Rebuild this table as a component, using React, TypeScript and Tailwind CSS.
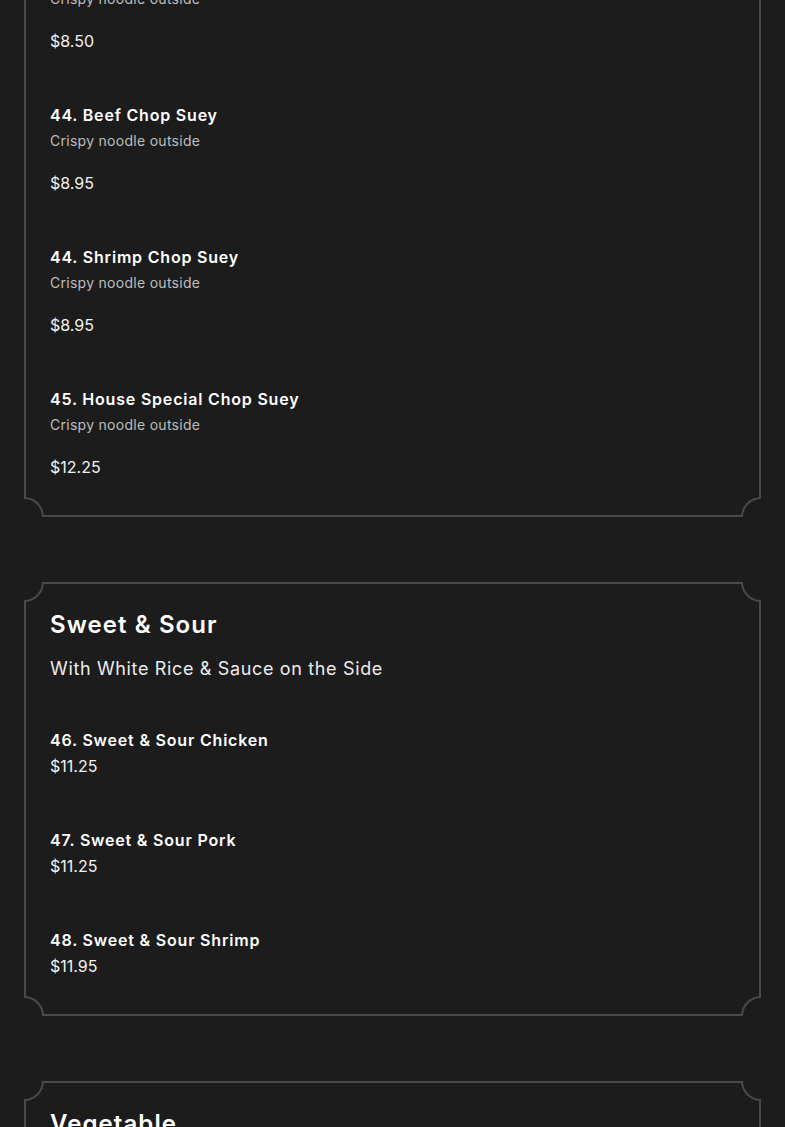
const font = { fontFamily: "Inter, 'Open Sans', sans-serif" };

type Item = { name: string; desc?: string; price: string };

const chopSuey: Item[] = [
  { name: "43. Pork Chop Suey", desc: "Crispy noodle outside", price: "$8.50" },
  { name: "44. Beef Chop Suey", desc: "Crispy noodle outside", price: "$8.95" },
  { name: "44. Shrimp Chop Suey", desc: "Crispy noodle outside", price: "$8.95" },
  { name: "45. House Special Chop Suey", desc: "Crispy noodle outside", price: "$12.25" },
];

const sweetSour: Item[] = [
  { name: "46. Sweet & Sour Chicken", price: "$11.25" },
  { name: "47. Sweet & Sour Pork", price: "$11.25" },
  { name: "48. Sweet & Sour Shrimp", price: "$11.95" },
];

function Corners() {
  const base = "absolute w-[20px] h-[20px] bg-[#1c1c1c] border-[#4a4a4a]";
  return (
    <>
      <div className={`${base} -left-[2px] -top-[2px] border-r-2 border-b-2 rounded-br-[20px]`} />
      <div className={`${base} -right-[2px] -top-[2px] border-l-2 border-b-2 rounded-bl-[20px]`} />
      <div className={`${base} -left-[2px] -bottom-[2px] border-r-2 border-t-2 rounded-tr-[20px]`} />
      <div className={`${base} -right-[2px] -bottom-[2px] border-l-2 border-t-2 rounded-tl-[20px]`} />
    </>
  );
}

function Card({ title, subtitle, items, className = "" }: {
  title?: string;
  subtitle?: string;
  items: Item[];
  className?: string;
}) {
  return (
    <section className={`relative flex flex-col border-2 border-[#4a4a4a] px-6 pt-[25px] pb-9 ${className}`}>
      <Corners />
      {title && (
        <div className="flex flex-col gap-[14px] mb-[45px]">
          <h2 className="text-2xl leading-8 font-semibold tracking-[0.045em] text-white">{title}</h2>
          <p className="text-lg leading-7 tracking-[0.036em] text-[#ececec]">{subtitle}</p>
        </div>
      )}
      <div className="flex flex-col gap-[50px]">
        {items.map((item, i) => (
          <MenuItem key={i} item={item} />
        ))}
      </div>
    </section>
  );
}

function MenuItem({ item }: { item: Item }) {
  return (
    <div className="flex flex-col">
      <h3 className="text-base leading-6 font-semibold tracking-[0.05em] text-white">{item.name}</h3>
      {item.desc && (
        <p className="mt-1 text-sm leading-5 tracking-[0.02em] text-[#bdbdbd]">{item.desc}</p>
      )}
      <p className={`${item.desc ? "mt-5" : "mt-0.5"} text-base leading-6 text-[#f2f2f2]`}>{item.price}</p>
    </div>
  );
}

export default function App() {
  return (
    <div className="min-h-screen bg-[#1c1c1c] px-6 overflow-hidden" style={font}>
      <div className="flex flex-col gap-[65px] -mt-[66px]">
        <Card items={chopSuey} />
        <Card title="Sweet & Sour" subtitle="With White Rice & Sauce on the Side" items={sweetSour} />
        <Card title="Vegetable" subtitle="With White Rice" items={[{ name: "49. Mixed Vegetables", price: "$9.25" }]} />
      </div>
    </div>
  );
}
